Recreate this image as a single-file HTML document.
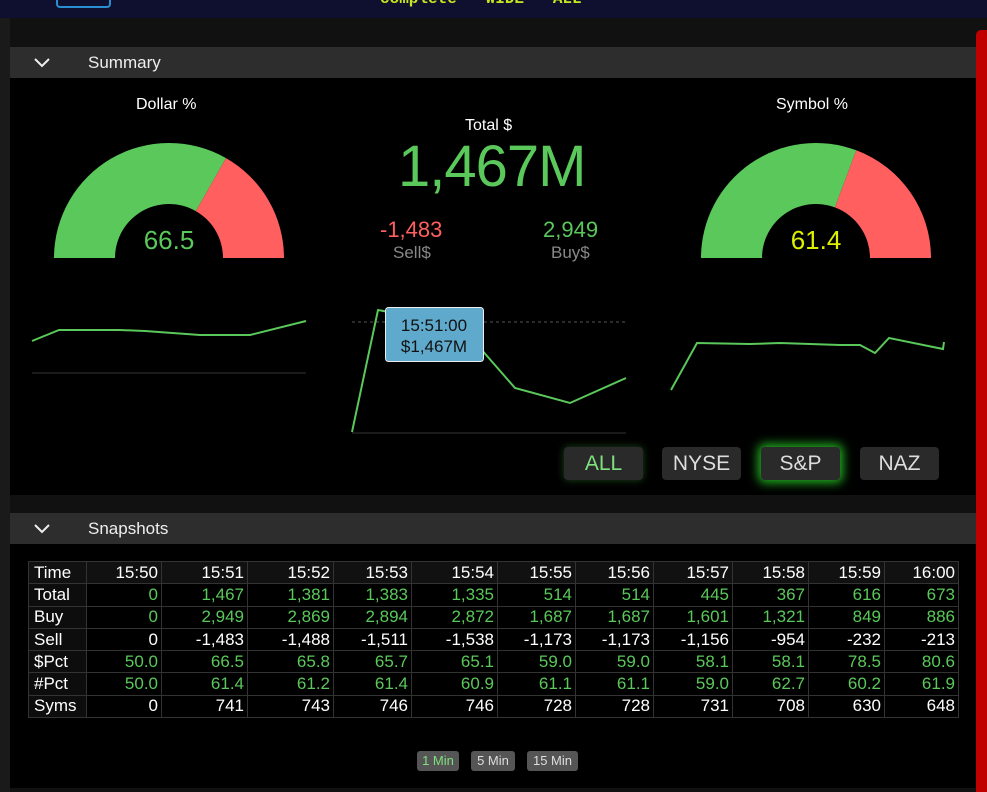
<!DOCTYPE html>
<html><head><meta charset="utf-8"><style>
*{margin:0;padding:0;box-sizing:border-box}
body{width:987px;height:792px;background:#000;font-family:"Liberation Sans",sans-serif;position:relative;overflow:hidden;color:#fff}
.a{position:absolute}
.bar{position:absolute;left:10px;width:966px;height:31px;background:#2d2d2d;font-size:17px;color:#eee}
.bar .t{position:absolute;left:78px;top:6px}
.bar svg{position:absolute;left:24px;top:11px}
.btn{position:absolute;top:447px;width:79px;height:33px;background:#2a2a2a;border-radius:4px;font-size:21px;color:#ddd;text-align:center;line-height:33px}
table{position:absolute;left:28px;top:561px;border-collapse:collapse;font-size:17px}
td{border:1px solid #333;height:22.3px;padding:0 3px;text-align:right;line-height:20px}
td:first-child{text-align:left;background:#0d0d0d;padding-left:5px}
tr:first-child td{background:#111}
.g{color:#5ac85a}
.sb{position:absolute;top:751px;height:20px;background:#555;border-radius:3px;font-size:13px;color:#ddd;text-align:center;line-height:20px}
</style></head><body>
<div class="a" style="left:0;top:0;width:987px;height:18px;background:#0f1030"></div>
<div class="a" style="left:56px;top:0;width:55px;height:8px;border:2px solid #2a8fd0;border-top:none;border-radius:0 0 4px 4px"></div>
<div class="a" style="left:380px;top:-10px;font-size:16px;color:#c8e61e;font-family:'Liberation Mono',monospace;font-weight:bold">complete · WIDE · ALL</div>
<div class="a" style="left:0;top:18px;width:987px;height:29px;background:#111"></div>
<div class="a" style="left:0;top:18px;width:10px;height:774px;background:#1a1a1a"></div>
<div class="a" style="left:976px;top:30px;width:11px;height:762px;background:#c00000;border-radius:5px 0 0 0"></div>

<div class="bar" style="top:47px"><svg width="16" height="10"><path d="M1 1 L8 8 L15 1" stroke="#eee" stroke-width="2" fill="none"/></svg><span class="t">Summary</span></div>

<div class="a" style="left:136px;top:96px;font-size:16px">Dollar %</div>
<div class="a" style="left:776px;top:96px;font-size:16px">Symbol %</div>
<div class="a" style="left:465px;top:117px;font-size:16px">Total $</div>
<div class="a" style="left:398px;top:133px;font-size:58px;color:#5ac85a;letter-spacing:-1px">1,467M</div>
<div class="a" style="left:380px;top:217px;font-size:22px;color:#ff5f5f">-1,483</div>
<div class="a" style="left:393px;top:243px;font-size:17px;color:#888">Sell$</div>
<div class="a" style="left:543px;top:217px;font-size:22px;color:#5ac85a">2,949</div>
<div class="a" style="left:551px;top:243px;font-size:17px;color:#888">Buy$</div>

<svg class="a" style="left:0;top:0" width="987" height="500">
<path d="M54 258 A115 115 0 0 1 226 158.1 L195.8 211.1 A54 54 0 0 0 115 258 Z" fill="#5ac85a"/>
<path d="M226 158.1 A115 115 0 0 1 284 258 L223 258 A54 54 0 0 0 195.8 211.1 Z" fill="#ff5f5f"/>
<path d="M701 258 A115 115 0 0 1 856.3 150.3 L834.9 207.4 A54 54 0 0 0 762 258 Z" fill="#5ac85a"/>
<path d="M856.3 150.3 A115 115 0 0 1 931 258 L870 258 A54 54 0 0 0 834.9 207.4 Z" fill="#ff5f5f"/>
<line x1="32" y1="373" x2="306" y2="373" stroke="#333"/>
<polyline points="32,341 59,330 120,330 145,331 200,335 250,335 306,321" stroke="#5ac85a" stroke-width="2" fill="none"/>
<line x1="352" y1="322" x2="626" y2="322" stroke="#555" stroke-dasharray="3,3"/>
<line x1="352" y1="433" x2="626" y2="433" stroke="#333"/>
<polyline points="352,432 378,310 460,325 515,388 570,403 626,378" stroke="#5ac85a" stroke-width="2" fill="none"/>
<polyline points="671,390 697,343 750,344 780,343 840,345 860,345 875,353 889,338 943,349 944,342" stroke="#5ac85a" stroke-width="2" fill="none"/>
<rect x="385.5" y="307.5" width="98" height="54" rx="3" fill="#5ea9cc" stroke="#eee"/>
<text x="434" y="331" fill="#111" font-size="17" text-anchor="middle" font-family="Liberation Sans">15:51:00</text>
<text x="434" y="352" fill="#111" font-size="17" text-anchor="middle" font-family="Liberation Sans">$1,467M</text>
<text x="169" y="249" fill="#5ac85a" font-size="26" text-anchor="middle" font-family="Liberation Sans">66.5</text>
<text x="816" y="249" fill="#dcf000" font-size="26" text-anchor="middle" font-family="Liberation Sans">61.4</text>
</svg>

<div class="btn" style="left:564px;color:#7fe07f;box-shadow:0 0 8px rgba(80,200,80,.35)">ALL</div>
<div class="btn" style="left:662px">NYSE</div>
<div class="btn" style="left:761px;box-shadow:0 0 10px 3px #22b022">S&amp;P</div>
<div class="btn" style="left:860px">NAZ</div>

<div class="a" style="left:10px;top:495px;width:966px;height:18px;background:#111"></div>
<div class="bar" style="top:513px"><svg width="16" height="10"><path d="M1 1 L8 8 L15 1" stroke="#eee" stroke-width="2" fill="none"/></svg><span class="t">Snapshots</span></div>

<table>
<colgroup><col style="width:58px"><col style="width:75px"><col style="width:86px"><col style="width:86px"><col style="width:78px"><col style="width:86px"><col style="width:78px"><col style="width:78px"><col style="width:79px"><col style="width:76px"><col style="width:76px"><col style="width:74px"></colgroup>
<tr><td>Time</td><td>15:50</td><td>15:51</td><td>15:52</td><td>15:53</td><td>15:54</td><td>15:55</td><td>15:56</td><td>15:57</td><td>15:58</td><td>15:59</td><td>16:00</td></tr>
<tr class="g"><td style="color:#fff">Total</td><td>0</td><td>1,467</td><td>1,381</td><td>1,383</td><td>1,335</td><td>514</td><td>514</td><td>445</td><td>367</td><td>616</td><td>673</td></tr>
<tr class="g"><td style="color:#fff">Buy</td><td>0</td><td>2,949</td><td>2,869</td><td>2,894</td><td>2,872</td><td>1,687</td><td>1,687</td><td>1,601</td><td>1,321</td><td>849</td><td>886</td></tr>
<tr><td>Sell</td><td>0</td><td>-1,483</td><td>-1,488</td><td>-1,511</td><td>-1,538</td><td>-1,173</td><td>-1,173</td><td>-1,156</td><td>-954</td><td>-232</td><td>-213</td></tr>
<tr class="g"><td style="color:#fff">$Pct</td><td>50.0</td><td>66.5</td><td>65.8</td><td>65.7</td><td>65.1</td><td>59.0</td><td>59.0</td><td>58.1</td><td>58.1</td><td>78.5</td><td>80.6</td></tr>
<tr class="g"><td style="color:#fff">#Pct</td><td>50.0</td><td>61.4</td><td>61.2</td><td>61.4</td><td>60.9</td><td>61.1</td><td>61.1</td><td>59.0</td><td>62.7</td><td>60.2</td><td>61.9</td></tr>
<tr><td>Syms</td><td>0</td><td>741</td><td>743</td><td>746</td><td>746</td><td>728</td><td>728</td><td>731</td><td>708</td><td>630</td><td>648</td></tr>
</table>

<div class="sb" style="left:417px;width:42px;color:#7fe07f">1 Min</div>
<div class="sb" style="left:471px;width:44px">5 Min</div>
<div class="sb" style="left:527px;width:51px">15 Min</div>
<div class="a" style="left:10px;top:788px;width:966px;height:4px;background:#111"></div>
</body></html>
